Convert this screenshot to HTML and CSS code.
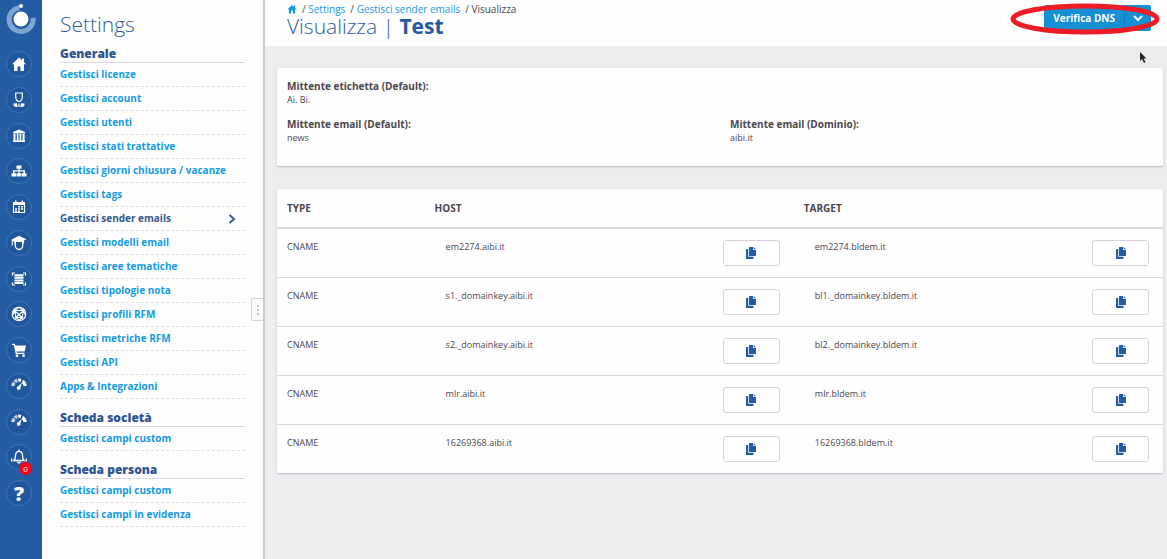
FILE: index.html
```html
<!DOCTYPE html>
<html lang="it">
<head>
  <meta charset="UTF-8">
  <meta name="viewport" content="width=device-width, initial-scale=1">
  <title>Visualizza | Test</title>
  <link rel="stylesheet" href="styles.css">
</head>
<body>
  <svg class="sprite" aria-hidden="true">
    <symbol id="i-home" viewBox="0 0 16 16"><path d="M8 1.500 1 8.200h2V15h3.600v-4.500h2.800V15H13V8.200h2l-2-2V2.500h-2v1.800z"/></symbol>
    <symbol id="i-copy" viewBox="0 0 12 12"><path d="M4.500 0H8v3h3v5.500a.5.5 0 0 1-.5.500h-6a.5.5 0 0 1-.5-.5v-8a.5.5 0 0 1 .5-.5zM8.700 0 11 2.300H8.700zM1.500 2H3.200v7.800H8.500v1.700a.5.5 0 0 1-.5.500H1.500a.5.5 0 0 1-.5-.5v-9a.5.5 0 0 1 .5-.5z"/></symbol>
    <symbol id="i-gauge" viewBox="0 0 16 16">
      <path d="M.3 8A7.700 7.700 0 0 1 1.900 3.600L4.400 5.600A4.300 4.300 0 0 0 3.600 8z" opacity=".75"/>
      <path d="M2.700 2.700A7.700 7.700 0 0 1 5.800.8l1 3.100a4.300 4.300 0 0 0-1.700 1z" opacity=".75"/>
      <path d="M7 .6a7.700 7.700 0 0 1 3.500.3L9.400 4a4 4 0 0 0-2-.2zM12 1.700A7.700 7.700 0 0 1 15.700 8h-3.300a4.300 4.300 0 0 0-1.500-3z"/>
      <path d="m11 4.500-1.500 4.800a1.900 1.900 0 1 1-1.900-1.200z"/>
    </symbol>
  </svg>

  <div class="app">
    <aside class="rail">
      <svg class="logo" viewBox="0 0 32 32">
        <path d="M16 4.500a12 12 0 1 0 12 12" fill="none" stroke="#7fa5d3" stroke-width="5" transform="rotate(-8 16 16)"/>
        <circle cx="16" cy="16" r="7.500" fill="#fff"/>
        <circle cx="16" cy="3" r="2" fill="#fff"/>
      </svg>
      <nav class="rail-nav">
        <a href="#" aria-label="Home"><svg><use href="#i-home"/></svg></a>
        <a href="#" aria-label="Persone"><svg viewBox="0 0 16 16">
          <path d="M4.700 1h6.600v3.800c0 2.600-1.500 4.700-3.300 4.700S4.700 7.400 4.700 4.800z" fill="none" stroke="currentColor" stroke-width="1.200"/>
          <path d="M2.500 11.500 6 11.200l.6 3.800H5a3 3 0 0 1-2.500-3.500zM13.500 11.500 10 11.200 9.400 15H11a3 3 0 0 0 2.500-3.500zM7.400 11.500h1.200V15H7.400z"/></svg></a>
        <a href="#" aria-label="Società"><svg viewBox="0 0 16 16"><path d="m8 1.500 6 2.500v1.500H2V4zM2.500 6h2v6.500h-2zM5.800 6h1.700v6.500H5.800zM8.600 6h1.700v6.500H8.600zM11.600 6h2v6.500h-2zM2 12.500h12V14H2z"/></svg></a>
        <a href="#" aria-label="Struttura"><svg viewBox="0 0 16 16"><path d="M5.500 2.500h5v3.200H8.600v1.500H14v3h1.500v3.300h-5v-3.300h2V8.400H8.600v1.800h1.300v3.300H6.100v-3.300h1.300V8.400H3.500v1.800h2v3.300h-5v-3.300H2v-3h5.400V5.700H5.500z"/></svg></a>
        <a href="#" aria-label="Calendario"><svg viewBox="0 0 16 16">
          <path d="M2.500 4h11v9.500h-11z" fill="none" stroke="currentColor" stroke-width="1.200"/>
          <path d="M2 3h12v3H2zM4 1.500h1.500v2H4zM10.500 1.500H12v2h-1.500zM7 7h2v1.500H7zM10 7h2v1.500h-2zM4 9.300h2v1.500H4zM7 9.300h2v1.500H7zM10 9.300h2v1.500h-2zM4 11.500h2V13H4zM7 11.500h2V13H7z"/></svg></a>
        <a href="#" aria-label="Formazione"><svg viewBox="0 0 16 16">
          <path d="m8 .8 7.500 3.400-2.500 1.300v2.500h-1.200V7H4.200v1H3V6H1.800v4.500H.7V4.600z"/>
          <path d="M4.300 7v3.500a3.700 4 0 0 0 7.400 0V7" fill="none" stroke="currentColor" stroke-width="1.400"/></svg></a>
        <a href="#" aria-label="Liste"><svg viewBox="0 0 16 16">
          <path d="M1.500 4.500V2H4M12 2h2.500v2.500M14.500 11.500V14H12M4 14H1.500v-2.500" fill="none" stroke="currentColor" stroke-width="1.200"/>
          <path d="M3.500 3.200h9v2h-9zM3.500 5.800h9v2h-9zM3.500 8.400h9v2h-9zM3.500 11h9v2h-9z"/></svg></a>
        <a href="#" aria-label="Rete"><svg viewBox="0 0 16 16">
          <g fill="none" stroke="currentColor" stroke-width="1.100"><circle cx="8" cy="8" r="6.800"/><path d="M3.500 4.500h9L11 11.500H5zM3.500 4.500l7.500 7M12.500 4.500 5 11.500M1.500 9.500l2-5L8 1.200l4.500 3.300 2 5M5 11.500l3 3 3-3"/></g>
          <circle cx="3.500" cy="4.500" r="1.300"/><circle cx="12.500" cy="4.500" r="1.300"/><circle cx="5" cy="11.500" r="1.300"/><circle cx="11" cy="11.500" r="1.300"/></svg></a>
        <a href="#" aria-label="Carrello"><svg viewBox="0 0 16 16"><path d="M1 1.800h2.800l.5 1.700H15l-1.400 6H5.500l.3 1.300h7.700V12H4.700L2.800 3H1z"/><circle cx="6" cy="13.700" r="1.400"/><circle cx="12.500" cy="13.700" r="1.400"/></svg></a>
        <a href="#" aria-label="Statistiche"><svg><use href="#i-gauge"/></svg></a>
        <a href="#" aria-label="Dashboard"><svg><use href="#i-gauge"/></svg></a>
        <a href="#" aria-label="Notifiche"><svg viewBox="0 0 16 16">
          <path d="M3 11.500c1.500-1.300 1.500-3 1.500-5C4.500 4 6 2.300 8 2.300S11.500 4 11.500 6.500c0 2 0 3.700 1.500 5zM8 .5v1.800M6.500 12.500a1.500 1.500 0 0 0 3 0M1 9.500q-.8 1.500 0 3M15 9.500q.8 1.500 0 3" fill="none" stroke="currentColor" stroke-width="1.300"/></svg><span class="badge">0</span></a>
        <a href="#" class="help" aria-label="Aiuto">?</a>
      </nav>
    </aside>

    <aside class="sidebar">
      <h2 class="sidebar-title">Settings</h2>
      <h3>Generale</h3>
      <ul>
        <li><a href="#">Gestisci licenze</a></li>
        <li><a href="#">Gestisci account</a></li>
        <li><a href="#">Gestisci utenti</a></li>
        <li><a href="#">Gestisci stati trattative</a></li>
        <li><a href="#">Gestisci giorni chiusura / vacanze</a></li>
        <li><a href="#">Gestisci tags</a></li>
        <li><a href="#" class="active">Gestisci sender emails
          <svg class="chevron" viewBox="0 0 8 10"><path d="m1.500 1 4.500 4-4.500 4"/></svg></a></li>
        <li><a href="#">Gestisci modelli email</a></li>
        <li><a href="#">Gestisci aree tematiche</a></li>
        <li><a href="#">Gestisci tipologie nota</a></li>
        <li><a href="#">Gestisci profili RFM</a></li>
        <li><a href="#">Gestisci metriche RFM</a></li>
        <li><a href="#">Gestisci API</a></li>
        <li><a href="#">Apps &amp; Integrazioni</a></li>
      </ul>
      <h3>Scheda società</h3>
      <ul>
        <li><a href="#">Gestisci campi custom</a></li>
      </ul>
      <h3>Scheda persona</h3>
      <ul>
        <li><a href="#">Gestisci campi custom</a></li>
        <li><a href="#">Gestisci campi in evidenza</a></li>
      </ul>
      <button class="handle" aria-label="Riduci menu"><i></i><i></i><i></i></button>
    </aside>

    <main class="main">
      <header class="header">
        <div>
          <nav class="breadcrumb">
            <a href="#" aria-label="Home"><svg><use href="#i-home"/></svg></a>
            <span>/ <a href="#">Settings</a></span>
            <span>/ <a href="#">Gestisci sender emails</a></span>
            <span>/ Visualizza</span>
          </nav>
          <h1>Visualizza | <strong>Test</strong></h1>
        </div>
        <div class="actions">
          <button class="btn-verify">Verifica DNS</button>
          <button class="btn-more" aria-label="Altre azioni"><svg viewBox="0 0 10 7"><path d="m1 1 4 4 4-4"/></svg></button>
          <svg class="highlight" viewBox="0 0 150 32"><ellipse cx="75" cy="16" rx="72" ry="13"/></svg>
        </div>
        <svg class="cursor" viewBox="0 0 8 12"><path d="M1 0v9l2-2 2 4 1.500-1-2-3.500h3z"/></svg>
      </header>

      <div class="content">
        <section class="card details">
          <dl class="full"><dt>Mittente etichetta (Default):</dt><dd>Ai. Bi.</dd></dl>
          <dl><dt>Mittente email (Default):</dt><dd>news</dd></dl>
          <dl><dt>Mittente email (Dominio):</dt><dd>aibi.it</dd></dl>
        </section>

        <table class="card records">
          <thead>
            <tr><th class="col-type">TYPE</th><th>HOST</th><th>TARGET</th></tr>
          </thead>
          <tbody>
            <tr>
              <td>CNAME</td>
              <td><div class="value">em2274.aibi.it<button aria-label="Copia host"><svg><use href="#i-copy"/></svg></button></div></td>
              <td><div class="value">em2274.bldem.it<button aria-label="Copia target"><svg><use href="#i-copy"/></svg></button></div></td>
            </tr>
            <tr>
              <td>CNAME</td>
              <td><div class="value">s1._domainkey.aibi.it<button aria-label="Copia host"><svg><use href="#i-copy"/></svg></button></div></td>
              <td><div class="value">bl1._domainkey.bldem.it<button aria-label="Copia target"><svg><use href="#i-copy"/></svg></button></div></td>
            </tr>
            <tr>
              <td>CNAME</td>
              <td><div class="value">s2._domainkey.aibi.it<button aria-label="Copia host"><svg><use href="#i-copy"/></svg></button></div></td>
              <td><div class="value">bl2._domainkey.bldem.it<button aria-label="Copia target"><svg><use href="#i-copy"/></svg></button></div></td>
            </tr>
            <tr>
              <td>CNAME</td>
              <td><div class="value">mlr.aibi.it<button aria-label="Copia host"><svg><use href="#i-copy"/></svg></button></div></td>
              <td><div class="value">mlr.bldem.it<button aria-label="Copia target"><svg><use href="#i-copy"/></svg></button></div></td>
            </tr>
            <tr>
              <td>CNAME</td>
              <td><div class="value">16269368.aibi.it<button aria-label="Copia host"><svg><use href="#i-copy"/></svg></button></div></td>
              <td><div class="value">16269368.bldem.it<button aria-label="Copia target"><svg><use href="#i-copy"/></svg></button></div></td>
            </tr>
          </tbody>
        </table>
      </div>
    </main>
  </div>
</body>
</html>
```

FILE: styles.css
```css
* {
  box-sizing: border-box;
}

body {
  margin: 0;
  font-family: "Open Sans", sans-serif;
  font-size: 9px;
  line-height: 13px;
  color: #4b474d;
}

a {
  color: #149be0;
  text-decoration: none;
}

button {
  font-family: inherit;
  cursor: pointer;
}

svg {
  fill: currentColor;
}

.sprite {
  display: none;
}

.app {
  display: flex;
  min-height: 100vh;
}

/* Icon rail */
.rail {
  flex: 0 0 42px;
  background: #245ca3;
  color: white;
}

.logo {
  display: block;
  width: 32px;
  height: 32px;
  margin: 3px 5px 16px;
}

.rail-nav {
  display: flex;
  flex-direction: column;
  justify-content: space-between;
  height: 455px;
  padding-left: 6px;
}

.rail-nav a {
  position: relative;
  display: flex;
  align-items: center;
  justify-content: center;
  width: 26px;
  height: 26px;
  border: 1px solid #3a75b4;
  border-radius: 50%;
  background: #20569b;
  color: white;
}

.rail-nav svg {
  width: 16px;
  height: 16px;
}

.rail-nav .help {
  font-size: 20px;
  font-weight: 800;
}

.badge {
  position: absolute;
  right: -1px;
  bottom: -6px;
  width: 13px;
  height: 13px;
  border-radius: 50%;
  background: #fa0012;
  font-size: 8px;
  text-align: center;
}

/* Settings menu */
.sidebar {
  position: relative;
  flex: 0 0 223px;
  padding: 9px 18px 20px 18px;
  border-right: 2px solid #c9c9d0;
  background: #fefefe;
}

.sidebar-title {
  margin: 0 0 7px;
  font-size: 21px;
  line-height: 30px;
  font-weight: 300;
  color: #315d9c;
}

.sidebar h3 {
  margin: 0;
  border-bottom: 1px solid #dcdae0;
  font-size: 12px;
  line-height: 16px;
  font-weight: 800;
  color: #2c5490;
}

.sidebar ul {
  margin: 0 0 11px;
  padding: 0;
  list-style: none;
}

.sidebar li a {
  display: flex;
  align-items: center;
  justify-content: space-between;
  height: 24px;
  padding-right: 9px;
  border-bottom: 1px dashed #e0dde4;
  font-size: 10px;
  font-weight: 700;
}

.sidebar li .active {
  color: #34588c;
}

.chevron {
  width: 8px;
  height: 10px;
  fill: none;
  stroke: #2c62a4;
  stroke-width: 2;
}

.handle {
  position: absolute;
  right: 0;
  top: 298px;
  display: flex;
  flex-direction: column;
  align-items: center;
  justify-content: center;
  gap: 2px;
  width: 12px;
  height: 23px;
  padding: 0;
  border: 1px solid #d9d2dc;
  border-right: 0;
  border-radius: 2px 0 0 2px;
  background: #fdfcfd;
}

.handle i {
  width: 2px;
  height: 2px;
  background: #c4bfc9;
}

/* Page */
.main {
  flex: 1;
  min-width: 0;
  background: #ededf0;
}

.header {
  position: relative;
  display: flex;
  justify-content: space-between;
  align-items: flex-start;
  height: 46px;
  padding: 3px 16px 0 22px;
  background: #fefefe;
}

.breadcrumb {
  display: flex;
  gap: 5px;
  font-size: 10px;
}

.breadcrumb svg {
  display: block;
  width: 10px;
  height: 12px;
}

h1 {
  margin: 0;
  font-size: 21px;
  line-height: 20px;
  font-weight: 300;
  color: #315d9c;
}

h1 strong {
  font-weight: 700;
  color: #2459a0;
}

.actions {
  position: relative;
  display: flex;
  margin-top: 2px;
}

.actions button {
  height: 26px;
  padding: 0 9px;
  border: 0;
  background: #168fd3;
  color: white;
  font-size: 10px;
  font-weight: 700;
}

.actions .btn-verify {
  border-radius: 2px 0 0 2px;
}

.actions .btn-more {
  padding: 0 8px;
  border-left: 1px solid #0f7fc2;
  border-radius: 0 2px 2px 0;
}

.btn-more svg {
  display: block;
  width: 10px;
  height: 7px;
  fill: none;
  stroke: white;
  stroke-width: 2;
}

/* Hand-drawn ring around the action buttons */
.highlight {
  position: absolute;
  right: -9px;
  top: -2px;
  width: 150px;
  height: 32px;
  fill: none;
  stroke: #ee1c24;
  stroke-width: 5;
  pointer-events: none;
}

.cursor {
  position: absolute;
  right: 20px;
  top: 52px;
  width: 8px;
  height: 12px;
  fill: #222;
}

.content {
  padding: 22px 4px 22px 12px;
}

.card {
  background: #fefefe;
  border-radius: 2px;
  box-shadow: 0 1px 2px #b9b6be;
}

.details {
  display: grid;
  grid-template-columns: 1fr 1fr;
  row-gap: 12px;
  margin-bottom: 23px;
  padding: 12px 0 22px;
}

.details .full {
  grid-column: 1 / -1;
}

.details dl {
  margin: 0;
  padding: 0 10px;
}

.details dd {
  margin: 0;
}

.details dt {
  font-size: 10px;
  font-weight: 700;
}

.records {
  width: 100%;
  table-layout: fixed;
  border-collapse: collapse;
}

.records th {
  height: 39px;
  padding: 0 10px;
  border-bottom: 2px solid #d8d6dc;
  font-size: 10px;
  text-align: left;
}

.records .col-type {
  width: 16.66%;
}

.records td {
  height: 49px;
  padding: 11px 10px 0;
  border-bottom: 1px solid #dcd6df;
  vertical-align: top;
}

.records tr:last-child td {
  border-bottom: 0;
}

.value {
  display: flex;
  justify-content: space-between;
  align-items: flex-start;
  padding: 0 4px 0 11px;
}

.value button {
  display: flex;
  align-items: center;
  justify-content: center;
  width: 57px;
  height: 26px;
  border: 1px solid #d9d0dc;
  border-radius: 3px;
  background: white;
  color: #245ca3;
}

.value svg {
  width: 12px;
  height: 12px;
}
```
